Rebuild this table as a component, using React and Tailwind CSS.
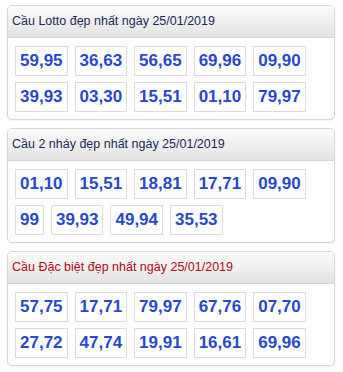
import React from 'react';

const panels = [
  {
    title: 'Cầu Lotto đẹp nhất ngày 25/01/2019',
    red: false,
    nums: ['59,95', '36,63', '56,65', '69,96', '09,90', '39,93', '03,30', '15,51', '01,10', '79,97'],
  },
  {
    title: 'Cầu 2 nháy đẹp nhất ngày 25/01/2019',
    red: false,
    nums: ['01,10', '15,51', '18,81', '17,71', '09,90', '99', '39,93', '49,94', '35,53'],
  },
  {
    title: 'Cầu Đặc biệt đẹp nhất ngày 25/01/2019',
    red: true,
    nums: ['57,75', '17,71', '79,97', '67,76', '07,70', '27,72', '47,74', '19,91', '16,61', '69,96'],
  },
];

const Panel = ({ title, red, nums }) => (
  <div className="mb-[8px] rounded-[5px] border border-[#d6d6d6] bg-white shadow-[0_1px_2px_rgba(0,0,0,0.06)] overflow-hidden">
    <div
      className={`h-[32px] flex items-center pl-[4px] text-[12.5px] border-b border-[#d4d4d4] bg-gradient-to-b from-[#fbfbfb] to-[#e3e3e3] ${
        red ? 'text-[#b3081c]' : 'text-[#1c2a58]'
      }`}
    >
      {title}
    </div>
    <div className="flex flex-wrap gap-x-[7px] gap-y-[6px] px-[7px] pt-[8px] pb-[7px]">
      {nums.map((n, i) => (
        <span
          key={i}
          className="h-[30px] flex items-center px-[4px] border border-[#dcdcdc] text-[17px] font-bold text-[#2848cf]"
        >
          {n}
        </span>
      ))}
    </div>
  </div>
);

export default function App() {
  return (
    <div className="w-[343px] h-[372px] bg-white pt-[5px] pl-[7px] pr-[8px] font-['Liberation_Sans',Arial,sans-serif]">
      {panels.map((p, i) => (
        <Panel key={i} {...p} />
      ))}
    </div>
  );
}
